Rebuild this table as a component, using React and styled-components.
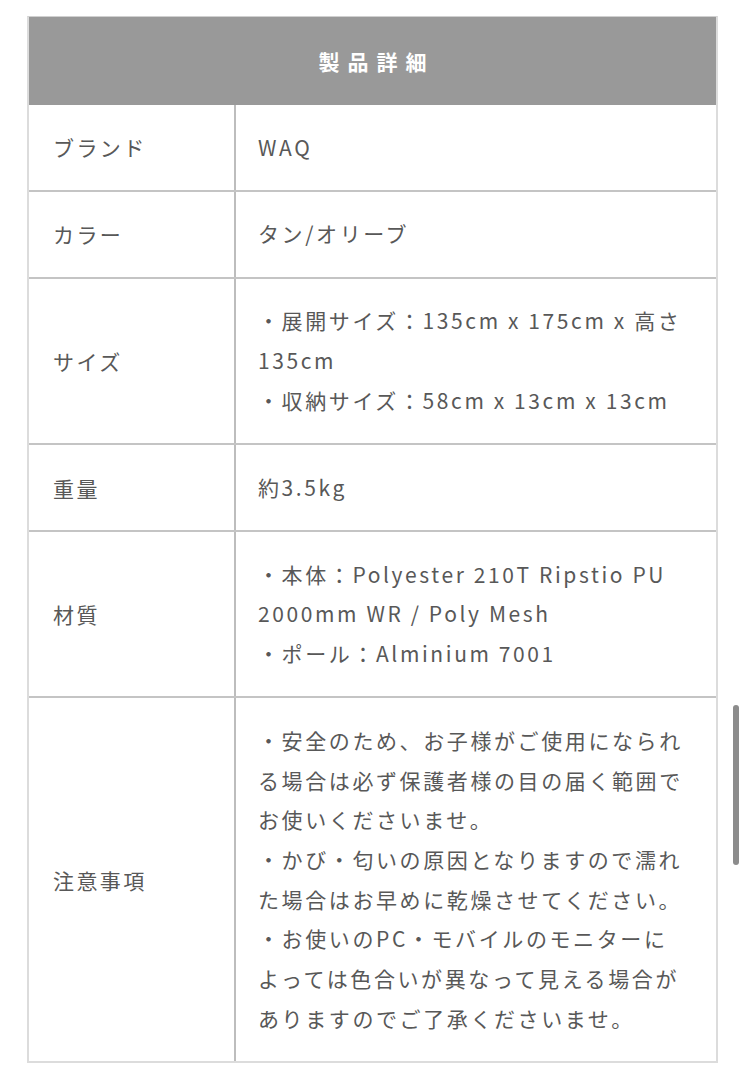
import React from 'react';
import styled, { createGlobalStyle } from 'styled-components';

const GlobalStyle = createGlobalStyle`
  html, body {
    margin: 0;
    padding: 0;
    background: #FFFFFF;
  }
  body {
    font-family: "Noto Sans CJK JP", "Noto Sans", sans-serif;
  }
`;

const ROWS = [
  { label: 'ブランド', lines: ['WAQ'] },
  { label: 'カラー', lines: ['タン/オリーブ'] },
  { label: 'サイズ', lines: ['・展開サイズ：135cm x 175cm x 高さ 135cm', '・収納サイズ：58cm x 13cm x 13cm'] },
  { label: '重量', lines: ['約3.5kg'] },
  { label: '材質', lines: ['・本体：Polyester 210T Ripstio PU 2000mm WR / Poly Mesh', '・ポール：Alminium 7001'] },
  {
    label: '注意事項',
    lines: [
      '・安全のため、お子様がご使用になられる場合は必ず保護者様の目の届く範囲でお使いくださいませ。',
      '・かび・匂いの原因となりますので濡れた場合はお早めに乾燥させてください。',
      '・お使いのPC・モバイルのモニターによっては色合いが異なって見える場合がありますのでご了承くださいませ。',
    ],
  },
];

export default function App() {
  return (
    <Page>
      <GlobalStyle />
      <SpecTable>
        <TableHeader>製品詳細</TableHeader>
        {ROWS.map((row, index) => (
          <SpecRow key={index} last={index === ROWS.length - 1}>
            <LabelCell>{row.label}</LabelCell>
            <ValueCell>
              {row.lines.map((line, i) => (
                <ValueLine key={i}>{line}</ValueLine>
              ))}
            </ValueCell>
          </SpecRow>
        ))}
      </SpecTable>
      <ScrollThumb />
    </Page>
  );
}

const ScrollThumb = styled.div`
  position: absolute;
  top: 705px;
  right: 6px;
  width: 6px;
  height: 160px;
  border-radius: 3px;
  background: #8c8c8c;
`;

const ValueLine = styled.div`
  margin: 0;
`;

const ValueCell = styled.div`
  padding: 22.6px 30px 22.6px 22px;
  font-size: 21px;
  line-height: 39.7px;
  letter-spacing: 2.6px;
  color: #585858;
  line-break: strict;
`;

const LabelCell = styled.div`
  display: flex;
  align-items: center;
  padding: 0 22px 0 24px;
  border-right: 2px solid #bdbdbd;
  font-size: 21px;
  letter-spacing: 2.4px;
  color: #585858;
`;

const SpecRow = styled.div`
  display: grid;
  grid-template-columns: 207px 1fr;
  border-bottom: ${props => (props.last ? 'none' : '2px solid #c4c4c4')};
`;

const TableHeader = styled.div`
  height: 88px;
  display: flex;
  align-items: center;
  justify-content: center;
  background: #999999;
  color: #FFFFFF;
  font-size: 21px;
  font-weight: 700;
  letter-spacing: 8px;
  padding-left: 8px;
`;

const SpecTable = styled.div`
  width: 691px;
  border: 2px solid #dcdcdc;
  border-top: 1px solid #d0d0d0;
  box-sizing: border-box;
`;

const Page = styled.div`
  position: relative;
  height: 1080px;
  padding: 16px 0 0 27px;
  box-sizing: border-box;
  overflow: hidden;
`;
